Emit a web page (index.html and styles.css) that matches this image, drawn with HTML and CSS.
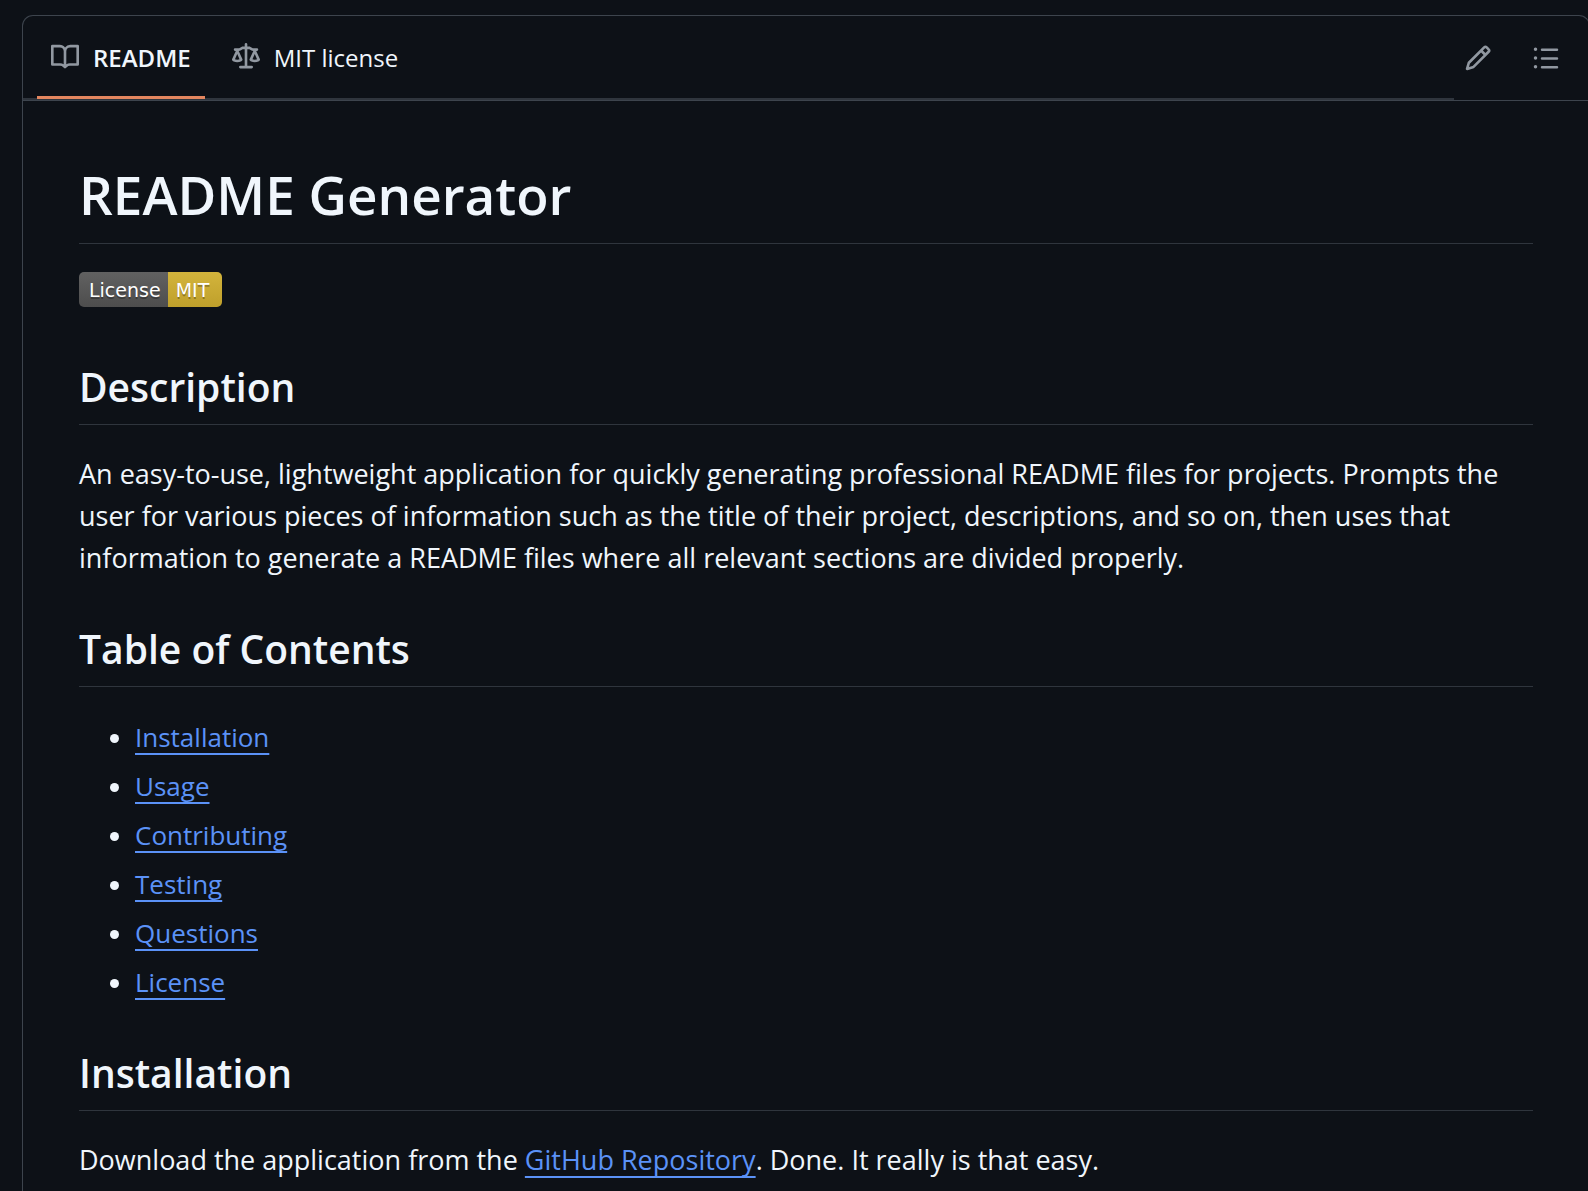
FILE: index.html
```html
<!DOCTYPE html>
<html lang="en">
<head>
<meta charset="utf-8">
<meta name="viewport" content="width=device-width, initial-scale=1">
<title>README Generator</title>
<link rel="stylesheet" href="styles.css">
</head>
<body>
<main class="panel">
  <header class="panel-header">
    <nav class="tabs" aria-label="Repository files">
      <a class="tab tab-active" href="#readme" aria-current="page">
        <svg class="icon" viewBox="0 0 16 16" aria-hidden="true"><path d="M0 1.75A.75.75 0 0 1 .75 1h4.253c1.227 0 2.317.59 3 1.501A3.743 3.743 0 0 1 11.006 1h4.245a.75.75 0 0 1 .75.75v10.5a.75.75 0 0 1-.75.75h-4.507a2.25 2.25 0 0 0-1.591.659l-.622.621a.75.75 0 0 1-1.06 0l-.622-.621A2.25 2.25 0 0 0 5.258 13H.75a.75.75 0 0 1-.75-.75Zm7.251 10.324.004-5.073-.002-2.253A2.25 2.25 0 0 0 5.003 2.5H1.5v9h3.757a3.75 3.75 0 0 1 1.994.574ZM8.755 4.75l-.004 7.322a3.752 3.752 0 0 1 1.992-.572H14.5v-9h-3.495a2.25 2.25 0 0 0-2.25 2.25Z"/></svg>
        <span>README</span>
      </a>
      <a class="tab" href="#mit-license">
        <svg class="icon" viewBox="0 0 16 16" aria-hidden="true"><path d="M8.75.75V2h.985c.304 0 .603.08.867.231l1.29.736c.038.022.08.033.124.033h2.234a.75.75 0 0 1 0 1.5h-.427l2.111 4.692a.75.75 0 0 1-.154.838l-.53-.53.529.531-.001.002-.002.002-.006.006-.006.005-.01.01-.045.04c-.21.176-.441.327-.686.45C14.556 10.78 13.88 11 13 11a4.498 4.498 0 0 1-2.023-.454 3.544 3.544 0 0 1-.686-.45l-.045-.04-.016-.015-.006-.006-.004-.004v-.001a.75.75 0 0 1-.154-.838L12.178 4.5h-.162c-.305 0-.604-.079-.868-.231l-1.29-.736a.245.245 0 0 0-.124-.033H8.75V13h2.5a.75.75 0 0 1 0 1.5h-6.5a.75.75 0 0 1 0-1.5h2.5V3.5h-.984a.245.245 0 0 0-.124.033l-1.289.737c-.265.15-.564.23-.869.23h-.162l2.112 4.692a.75.75 0 0 1-.154.838l-.53-.53.529.531-.001.002-.002.002-.006.006-.016.015-.045.04c-.21.176-.441.327-.686.45C4.556 10.78 3.88 11 3 11a4.498 4.498 0 0 1-2.023-.454 3.544 3.544 0 0 1-.686-.45l-.045-.04-.016-.015-.006-.006-.004-.004v-.001a.75.75 0 0 1-.154-.838L2.178 4.5H1.75a.75.75 0 0 1 0-1.5h2.234a.249.249 0 0 0 .125-.033l1.288-.737c.265-.15.564-.23.869-.23h.984V.75a.75.75 0 0 1 1.5 0Zm2.945 8.477c.285.135.718.273 1.305.273s1.02-.138 1.305-.273L13 6.327Zm-10 0c.285.135.718.273 1.305.273s1.02-.138 1.305-.273L3 6.327Z"/></svg>
        <span>MIT license</span>
      </a>
    </nav>
    <div class="actions">
      <button class="icon-button" type="button" aria-label="Edit file">
        <svg class="icon" viewBox="0 0 16 16" aria-hidden="true"><path d="M11.013 1.427a1.75 1.75 0 0 1 2.474 0l1.086 1.086a1.75 1.75 0 0 1 0 2.474l-8.61 8.61c-.21.21-.47.364-.756.445l-3.251.93a.75.75 0 0 1-.927-.928l.929-3.25c.081-.286.235-.547.445-.758l8.61-8.61Zm.176 4.823L9.75 4.81l-6.286 6.287a.253.253 0 0 0-.064.108l-.558 1.953 1.953-.558a.253.253 0 0 0 .108-.064Zm1.238-3.763a.25.25 0 0 0-.354 0L10.811 3.75l1.439 1.44 1.263-1.263a.25.25 0 0 0 0-.354Z"/></svg>
      </button>
      <button class="icon-button" type="button" aria-label="Outline">
        <svg class="icon" viewBox="0 0 16 16" aria-hidden="true"><path d="M5.75 2.5h8.5a.75.75 0 0 1 0 1.5h-8.5a.75.75 0 0 1 0-1.5Zm0 5h8.5a.75.75 0 0 1 0 1.5h-8.5a.75.75 0 0 1 0-1.5Zm0 5h8.5a.75.75 0 0 1 0 1.5h-8.5a.75.75 0 0 1 0-1.5ZM2 14a1 1 0 1 1 0-2 1 1 0 0 1 0 2Zm1-6a1 1 0 1 1-2 0 1 1 0 0 1 2 0ZM2 4a1 1 0 1 1 0-2 1 1 0 0 1 0 2Z"/></svg>
      </button>
    </div>
  </header>

  <article class="markdown" id="readme">
    <h1>README Generator</h1>
    <p class="badges"><a class="badge" href="#mit-license"><span class="badge-label">License</span><span class="badge-value">MIT</span></a></p>

    <h2>Description</h2>
    <p>An easy-to-use, lightweight application for quickly generating professional README files for projects. Prompts the user for various pieces of information such as the title of their project, descriptions, and so on, then uses that information to generate a README files where all relevant sections are divided properly.</p>

    <h2>Table of Contents</h2>
    <ul>
      <li><a href="#installation">Installation</a></li>
      <li><a href="#usage">Usage</a></li>
      <li><a href="#contributing">Contributing</a></li>
      <li><a href="#testing">Testing</a></li>
      <li><a href="#questions">Questions</a></li>
      <li><a href="#license">License</a></li>
    </ul>

    <h2 id="installation">Installation</h2>
    <p>Download the application from the <a href="#repository">GitHub Repository</a>. Done. It really is that easy.</p>
  </article>
</main>
</body>
</html>
```
FILE: styles.css
```css
:root {
  --bg: #0d1117;
  --text: #f0f6fc;
  --muted: #9198a1;
  --border: #3d444d;
  --border-muted: #2f353d;
  --link: #5b92f7;
  --accent: #e3865f;
}

* {
  box-sizing: border-box;
}

body {
  margin: 0;
  padding: 15px 0 0 22px;
  overflow-x: hidden;
  background: var(--bg);
  color: var(--text);
  font-family: "Open Sans", "Noto Sans", sans-serif;
  font-size: 27px;
  line-height: 42px;
}

.panel {
  min-height: calc(100vh - 15px);
  margin-right: -2px;
  border: 1px solid var(--border);
  border-bottom: 0;
  border-radius: 11px 11px 0 0;
}

.panel-header {
  display: flex;
  height: 85px;
  border-bottom: 1px solid var(--border);
}

.tabs {
  display: flex;
  flex: 1;
  gap: 13px;
  padding-left: 14px;
  border-bottom: 2px solid var(--border-muted);
}

.tab {
  display: flex;
  align-items: center;
  gap: 14px;
  height: 83px;
  padding: 3px 14px 0;
  border-bottom: 3px solid transparent;
  color: var(--text);
  font-size: 24px;
  text-decoration: none;
}

.tab-active {
  border-color: var(--accent);
  font-weight: 600;
}

.icon {
  flex: none;
  width: 28px;
  height: 28px;
  fill: var(--muted);
}

.tab .icon {
  margin-bottom: 2px;
}

.actions {
  display: flex;
  align-items: center;
  gap: 20px;
  padding-right: 19px;
}

.icon-button {
  display: grid;
  place-items: center;
  width: 48px;
  height: 48px;
  padding: 0;
  border: 0;
  background: none;
}

.markdown {
  padding: 56px;
  padding-bottom: 0;
}

.markdown h1,
.markdown h2 {
  margin: 42px 0 28px;
  border-bottom: 1px solid var(--border-muted);
  font-weight: 600;
}

.markdown h1 {
  margin-top: 0;
  padding-bottom: 10px;
  font-size: 53px;
  line-height: 76px;
}

.markdown h2 {
  padding-bottom: 10px;
  font-size: 39px;
  line-height: 55px;
}

.markdown p,
.markdown ul {
  margin: 0;
}

.markdown ul {
  padding: 1px 0 0 56px;
  font-size: 26px;
}

.markdown li + li {
  margin-top: 7px;
}

.markdown a {
  color: var(--link);
  text-decoration-thickness: 2px;
  text-underline-offset: 6px;
}

.markdown .badges {
  display: flex;
  align-items: flex-start;
  min-height: 45px;
}

.markdown .badge {
  display: flex;
  height: 35px;
  overflow: hidden;
  border-radius: 5px;
  color: #fff;
  font-family: "DejaVu Sans", sans-serif;
  font-size: 19px;
  line-height: 37px;
  text-decoration: none;
  text-shadow: 0 2px 0 rgba(1, 1, 1, 0.3);
}

.badge-label {
  padding: 0 7px 0 10px;
  background: linear-gradient(#616161, #4d4d4d);
}

.badge-value {
  padding: 0 13px 0 8px;
  background: linear-gradient(#d3b43c, #bfa02b);
}
```
